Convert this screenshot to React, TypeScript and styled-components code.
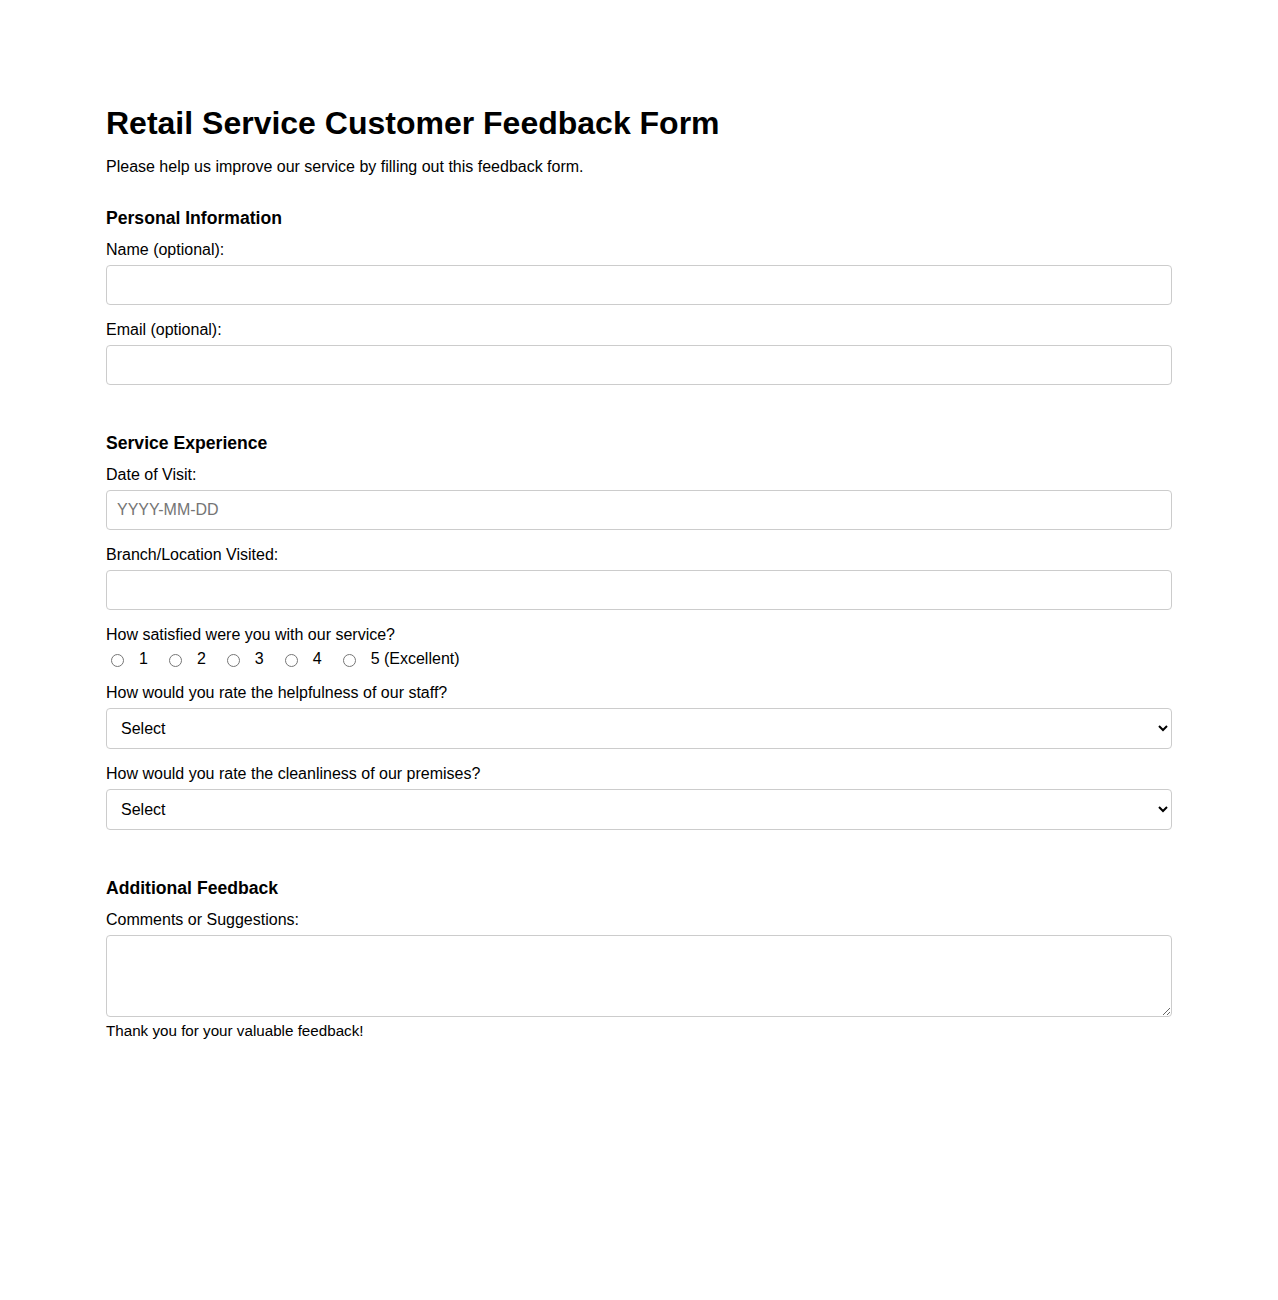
import React from "react";
import styled, { createGlobalStyle } from "styled-components";

const Global = createGlobalStyle`
  html, body { margin: 0; padding: 0; background: #fff; }
  body { font-family: "Liberation Sans", Arial, sans-serif; color: #000; }
  * { box-sizing: border-box; }
`;

const Page = styled.div`
  max-width: 1066px;
  margin: 0 auto;
  padding: 105px 0 40px;
`;

const Title = styled.h1`
  font-size: 32px;
  font-weight: bold;
  margin: 0 0 16px;
  line-height: 37px;
`;

const Intro = styled.p`
  font-size: 16px;
  margin: 0 0 32px;
  line-height: 18px;
`;

const Section = styled.section`
  margin-bottom: 48px;
`;

const SectionTitle = styled.h3`
  font-size: 17.6px;
  font-weight: bold;
  margin: 0 0 13px;
  line-height: 20px;
`;

const Label = styled.label`
  display: block;
  font-size: 16px;
  line-height: 18px;
  margin-bottom: 6px;
`;

const Field = styled.div`
  margin-bottom: 16px;
`;

const TextInput = styled.input`
  display: block;
  width: 100%;
  height: 40px;
  padding: 10px;
  font-family: "Liberation Sans", Arial, sans-serif;
  font-size: 16px;
  border: 1px solid #ccc;
  border-radius: 4px;
  background: #fff;
  &::placeholder { color: #757575; }
`;

const Select = styled.select`
  display: block;
  width: 100%;
  height: 41px;
  padding: 10px;
  font-family: "Liberation Sans", Arial, sans-serif;
  font-size: 16px;
  color: #000;
  border: 1px solid #ccc;
  border-radius: 4px;
  background: #fff;
`;

const TextArea = styled.textarea`
  display: block;
  width: 100%;
  height: 82px;
  padding: 10px;
  font-family: "Liberation Sans", Arial, sans-serif;
  font-size: 16px;
  border: 1px solid #ccc;
  border-radius: 4px;
  background: #fff;
`;

const RadioRow = styled.div`
  display: flex;
  align-items: center;
  height: 18px;
  margin-top: 1px;
`;

const RadioOption = styled.label`
  display: inline-flex;
  align-items: center;
  font-size: 16px;
  line-height: 18px;
  margin-right: 16px;
`;

const Radio = styled.input`
  margin: 3px 15px 0 5px;
  width: 13px;
  height: 13px;
`;

const Thanks = styled.p`
  font-size: 15.2px;
  line-height: 18px;
  margin: 5px 0 0;
`;

const ratings = ["1", "2", "3", "4", "5 (Excellent)"];

export default function App() {
  return (
    <>
      <Global />
      <Page>
        <Title>Retail Service Customer Feedback Form</Title>
        <Intro>Please help us improve our service by filling out this feedback form.</Intro>

        <Section>
          <SectionTitle>Personal Information</SectionTitle>
          <Field>
            <Label htmlFor="name">Name (optional):</Label>
            <TextInput id="name" type="text" />
          </Field>
          <Field>
            <Label htmlFor="email">Email (optional):</Label>
            <TextInput id="email" type="email" />
          </Field>
        </Section>

        <Section>
          <SectionTitle>Service Experience</SectionTitle>
          <Field>
            <Label htmlFor="date">Date of Visit:</Label>
            <TextInput id="date" type="text" placeholder="YYYY-MM-DD" />
          </Field>
          <Field>
            <Label htmlFor="branch">Branch/Location Visited:</Label>
            <TextInput id="branch" type="text" />
          </Field>
          <Field>
            <Label as="div">How satisfied were you with our service?</Label>
            <RadioRow>
              {ratings.map((r, i) => (
                <RadioOption key={r}>
                  <Radio type="radio" name="satisfaction" value={i + 1} />
                  {r}
                </RadioOption>
              ))}
            </RadioRow>
          </Field>
          <Field>
            <Label htmlFor="staff">How would you rate the helpfulness of our staff?</Label>
            <Select id="staff" defaultValue="">
              <option value="">Select</option>
              <option>Excellent</option>
              <option>Good</option>
              <option>Average</option>
              <option>Poor</option>
            </Select>
          </Field>
          <Field>
            <Label htmlFor="clean">How would you rate the cleanliness of our premises?</Label>
            <Select id="clean" defaultValue="">
              <option value="">Select</option>
              <option>Excellent</option>
              <option>Good</option>
              <option>Average</option>
              <option>Poor</option>
            </Select>
          </Field>
        </Section>

        <section>
          <SectionTitle>Additional Feedback</SectionTitle>
          <Label htmlFor="comments">Comments or Suggestions:</Label>
          <TextArea id="comments" />
          <Thanks>Thank you for your valuable feedback!</Thanks>
        </section>
      </Page>
    </>
  );
}
